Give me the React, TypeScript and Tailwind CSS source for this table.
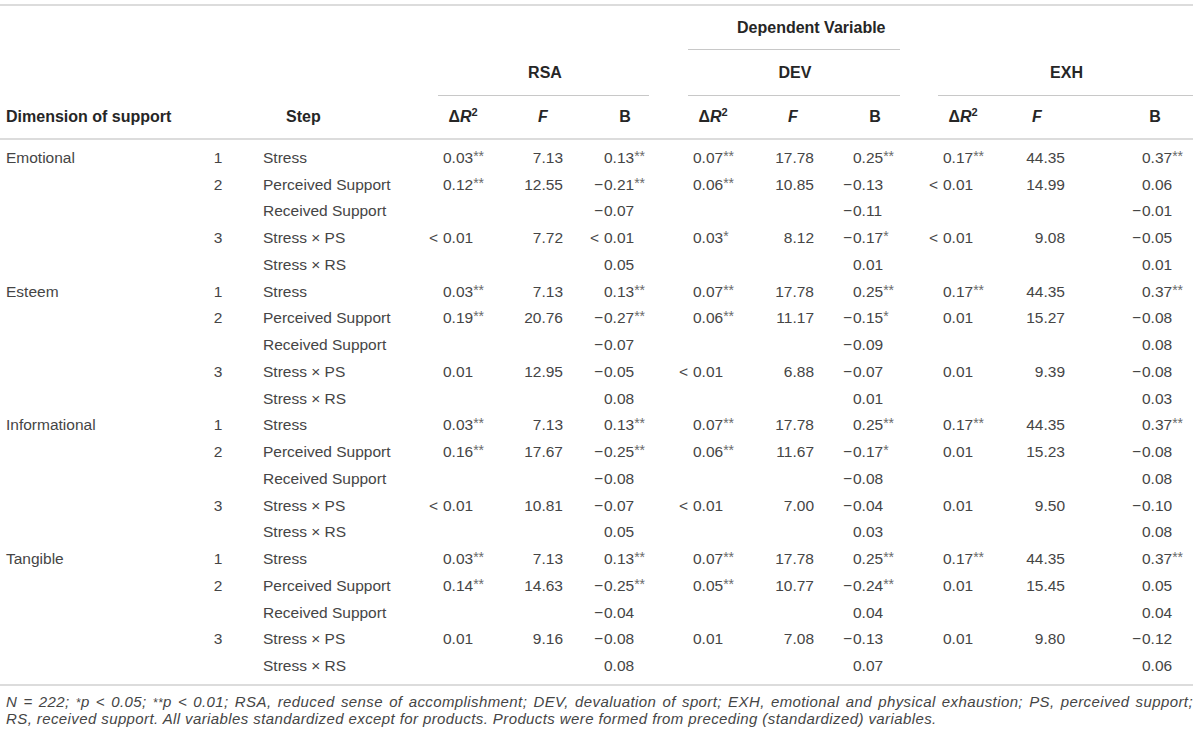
import React from "react";

type Row = { dim?: string; step?: string; label: string; v: (string | null)[] };

const STRESS = ["0.03**", "7.13", "0.13**", "0.07**", "17.78", "0.25**", "0.17**", "44.35", "0.37**"];

const ROWS: Row[] = [
  { dim: "Emotional", step: "1", label: "Stress", v: STRESS },
  { step: "2", label: "Perceived Support", v: ["0.12**", "12.55", "−0.21**", "0.06**", "10.85", "−0.13", "< 0.01", "14.99", "0.06"] },
  { label: "Received Support", v: [null, null, "−0.07", null, null, "−0.11", null, null, "−0.01"] },
  { step: "3", label: "Stress × PS", v: ["< 0.01", "7.72", "< 0.01", "0.03*", "8.12", "−0.17*", "< 0.01", "9.08", "−0.05"] },
  { label: "Stress × RS", v: [null, null, "0.05", null, null, "0.01", null, null, "0.01"] },

  { dim: "Esteem", step: "1", label: "Stress", v: STRESS },
  { step: "2", label: "Perceived Support", v: ["0.19**", "20.76", "−0.27**", "0.06**", "11.17", "−0.15*", "0.01", "15.27", "−0.08"] },
  { label: "Received Support", v: [null, null, "−0.07", null, null, "−0.09", null, null, "0.08"] },
  { step: "3", label: "Stress × PS", v: ["0.01", "12.95", "−0.05", "< 0.01", "6.88", "−0.07", "0.01", "9.39", "−0.08"] },
  { label: "Stress × RS", v: [null, null, "0.08", null, null, "0.01", null, null, "0.03"] },

  { dim: "Informational", step: "1", label: "Stress", v: STRESS },
  { step: "2", label: "Perceived Support", v: ["0.16**", "17.67", "−0.25**", "0.06**", "11.67", "−0.17*", "0.01", "15.23", "−0.08"] },
  { label: "Received Support", v: [null, null, "−0.08", null, null, "−0.08", null, null, "0.08"] },
  { step: "3", label: "Stress × PS", v: ["< 0.01", "10.81", "−0.07", "< 0.01", "7.00", "−0.04", "0.01", "9.50", "−0.10"] },
  { label: "Stress × RS", v: [null, null, "0.05", null, null, "0.03", null, null, "0.08"] },

  { dim: "Tangible", step: "1", label: "Stress", v: STRESS },
  { step: "2", label: "Perceived Support", v: ["0.14**", "14.63", "−0.25**", "0.05**", "10.77", "−0.24**", "0.01", "15.45", "0.05"] },
  { label: "Received Support", v: [null, null, "−0.04", null, null, "0.04", null, null, "0.04"] },
  { step: "3", label: "Stress × PS", v: ["0.01", "9.16", "−0.08", "0.01", "7.08", "−0.13", "0.01", "9.80", "−0.12"] },
  { label: "Stress × RS", v: [null, null, "0.08", null, null, "0.07", null, null, "0.06"] },
];

// how each value column lines up: decimal anchor (prefix box width) or right edge
const COLS: { kind: "d" | "f"; cls: string; spacerAfter?: boolean }[] = [
  { kind: "d", cls: "w-[20px]" },
  { kind: "f", cls: "pr-[20px]" },
  { kind: "d", cls: "w-[21px]", spacerAfter: true },
  { kind: "d", cls: "w-[20px]" },
  { kind: "f", cls: "pr-[19px]" },
  { kind: "d", cls: "w-[20px]" },
  { kind: "d", cls: "w-[26px]" },
  { kind: "f", cls: "pr-0", spacerAfter: true },
  { kind: "d", cls: "w-[32px]" },
];

const GRID =
  "grid grid-cols-[200px_36px_187px_80px_80px_84px_6px_80px_80px_84px_92px_56px_45px_90px]";

function Value({ v, col }: { v: string | null; col: (typeof COLS)[number] }) {
  if (!v) return <div />;
  const m = v.match(/^(<\s|−)?([0-9.]+)(\**)$/);
  const prefix = m?.[1]?.trim() ?? "";
  const num = m?.[2] ?? v;
  const stars = m?.[3] ?? "";
  if (col.kind === "f") {
    return <div className={`text-right ${col.cls}`}>{num}</div>;
  }
  return (
    <div className="flex whitespace-nowrap">
      <span className={`flex justify-end shrink-0 ${col.cls} ${prefix === "<" ? "pr-[5px]" : "pr-[1px]"}`}>{prefix}</span>
      <span>{num}</span>
      {stars && <span className="text-[14px] text-[#6a6a6a]">{stars}</span>}
    </div>
  );
}

function DeltaR() {
  return (
    <span>
      Δ<i>R</i>
      <sup className="text-[11px] relative -top-[6px]">2</sup>
    </span>
  );
}

export default function App() {
  return (
    <div className="w-[1200px] h-[737px] bg-white pt-[4px] font-['Liberation_Sans',Arial,sans-serif] text-[15.5px] text-[#454545] overflow-hidden">
      <div className="h-[2px] w-[1193px] bg-[#dcdcdc]" />

      {/* Dependent variable caption */}
      <div className="h-[43px] flex items-center pl-[737px] font-bold text-[16px] text-[#262626]">Dependent Variable</div>
      <div className="h-px w-[212px] ml-[688px] bg-[#c8c8c8]" />

      {/* Group labels */}
      <div className={`${GRID} h-[45px] items-center font-bold text-[16px] text-[#262626]`}>
        <div className="col-start-4 col-span-3 text-center">RSA</div>
        <div className="col-start-8 col-span-3 text-center">DEV</div>
        <div className="col-start-11 col-span-4 text-center pl-[16px]">EXH</div>
      </div>
      <div className="flex h-px">
        <div className="ml-[438px] w-[211px] bg-[#c8c8c8]" />
        <div className="ml-[39px] w-[212px] bg-[#c8c8c8]" />
        <div className="ml-[38px] w-[255px] bg-[#c8c8c8]" />
      </div>

      {/* Column headers */}
      <div className={`${GRID} h-[42px] items-center font-bold text-[16px] text-[#262626]`}>
        <div className="pl-[6px]">Dimension of support</div>
        <div />
        <div className="pl-[50px]">Step</div>
        <div className="text-center"><DeltaR /></div>
        <div className="text-center"><i>F</i></div>
        <div className="text-center">B</div>
        <div />
        <div className="text-center"><DeltaR /></div>
        <div className="text-center"><i>F</i></div>
        <div className="text-center">B</div>
        <div className="text-center"><DeltaR /></div>
        <div className="text-center"><i>F</i></div>
        <div />
        <div className="text-center">B</div>
      </div>
      <div className="h-[2px] w-[1193px] bg-[#dcdcdc]" />

      {/* Body */}
      <div className="pt-[4px] pb-[5px]">
        {ROWS.map((r, i) => (
          <div key={i} className={`${GRID} h-[26.75px] items-center`}>
            <div className="pl-[6px]">{r.dim ?? ""}</div>
            <div className="text-center">{r.step ?? ""}</div>
            <div className="pl-[27px] whitespace-nowrap">{r.label}</div>
            {COLS.map((c, j) => (
              <React.Fragment key={j}>
                <Value v={r.v[j]} col={c} />
                {c.spacerAfter && <div />}
              </React.Fragment>
            ))}
          </div>
        ))}
      </div>
      <div className="h-[2px] w-[1193px] bg-[#dcdcdc]" />

      {/* Footnote */}
      <div className="mt-[8px] pl-[6px] w-[1193px] italic text-[15px] tracking-[0.4px] leading-[16px] text-[#454545]">
        <p className="text-justify [text-align-last:justify] whitespace-nowrap">
          N = 222; <span className="text-[12px]">*</span>p &lt; 0.05;{" "}
          <span className="text-[12px]">**</span>p &lt; 0.01; RSA, reduced sense of accomplishment; DEV, devaluation of sport; EXH, emotional and physical exhaustion; PS, perceived support;
        </p>
        <p className="whitespace-nowrap">
          RS, received support. All variables standardized except for products. Products were formed from preceding (standardized) variables.
        </p>
      </div>
    </div>
  );
}
